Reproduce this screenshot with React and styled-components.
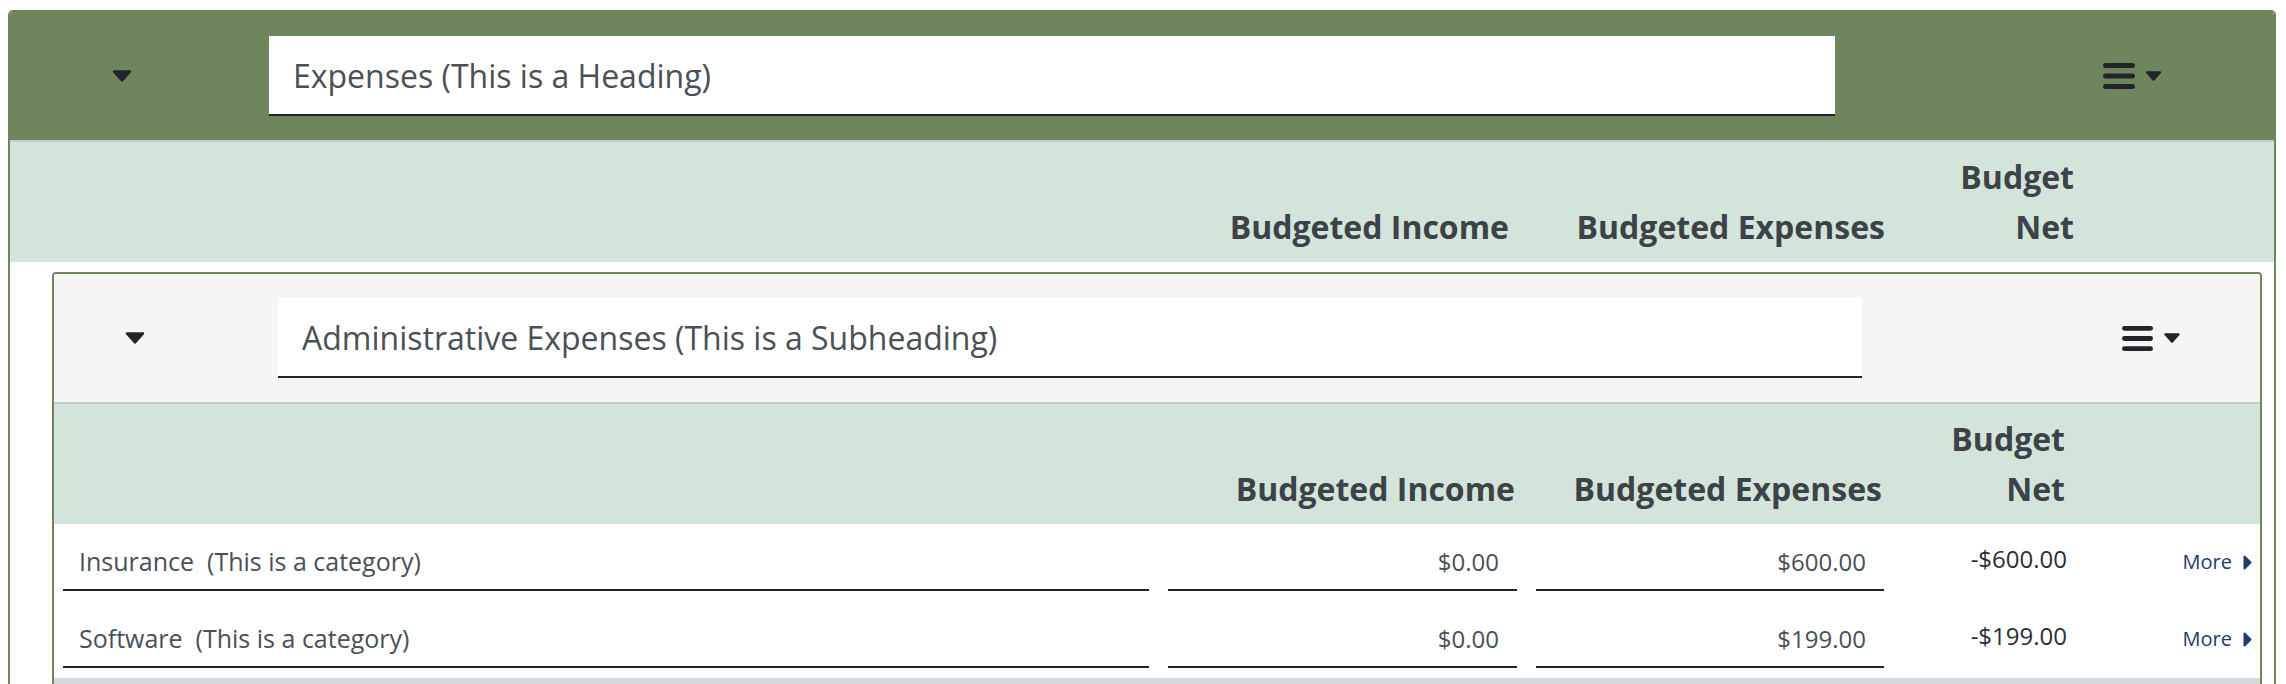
import React from "react";
import styled, { createGlobalStyle } from "styled-components";

const GlobalStyle = createGlobalStyle`
  html, body {
    margin: 0;
    padding: 0;
    overflow: hidden;
    background: #FFFFFF;
  }
  body {
    padding: 10px 10px 0 8px;
    font-family: "Open Sans", "Liberation Sans", sans-serif;
    color: #212529;
  }
`;

const OuterCard = styled.div`
  border: 2px solid #6F855E;
  border-radius: 5px;
  background-color: #FFFFFF;
  overflow: hidden;
  padding-bottom: 10px;
`;

const InnerCard = styled.div`
  margin: 10px 12px 0 42px;
  border: 2px solid #6F855E;
  border-radius: 4px;
  background-color: #FFFFFF;
  overflow: hidden;
`;

//CABECERA
const HeadingBar = styled.div`
  display: grid;
  grid-template-columns: ${props => props.$cols};
  column-gap: ${props => props.$gap}px;
  align-items: center;
  padding: 24px 0;
  background-color: ${props => props.$bg};
`;

const ToggleButton = styled.button`
  justify-self: center;
  display: flex;
  align-items: center;
  justify-content: center;
  width: 40px;
  height: 40px;
  padding: 0;
  border: none;
  background: transparent;
  cursor: pointer;
`;

const HeadingInput = styled.input`
  box-sizing: border-box;
  width: 100%;
  height: 80px;
  padding: 0 24px;
  border: none;
  border-bottom: 2px solid #212529;
  border-radius: 0;
  background-color: #FFFFFF;
  font-family: "Open Sans", "Liberation Sans", sans-serif;
  font-size: 32px;
  color: #495057;
  outline: none;
`;

const MenuButton = styled.button`
  justify-self: end;
  margin-right: ${props => props.$right}px;
  display: flex;
  align-items: center;
  gap: 9px;
  padding: 0;
  border: none;
  background: transparent;
  cursor: pointer;
`;

//TABLA
const HeaderRow = styled.div`
  display: grid;
  grid-template-columns: ${props => props.$cols};
  column-gap: 19px;
  padding: 10px 0 10px 9px;
  border-top: 2px solid #C6CACC;
  background-color: #D3E4DA;
`;

const HeaderLabel = styled.div`
  align-self: end;
  padding-right: 2px;
  text-align: right;
  font-size: 32px;
  font-weight: 700;
  line-height: 50px;
  color: #3C4248;
`;

const ItemRow = styled.div`
  display: grid;
  grid-template-columns: ${props => props.$cols};
  column-gap: 19px;
  align-items: start;
  padding: 11px 8px 10px 9px;
  background-color: #FFFFFF;
`;

const CellInput = styled.input`
  box-sizing: border-box;
  width: 100%;
  height: 56px;
  padding: 8px ${props => (props.$right ? "18px" : "16px")} 10px;
  border: none;
  border-bottom: 2px solid #212529;
  border-radius: 0;
  background: transparent;
  font-family: "Open Sans", "Liberation Sans", sans-serif;
  font-size: ${props => (props.$right ? "24px" : "25px")};
  line-height: 36px;
  text-align: ${props => (props.$right ? "right" : "left")};
  color: #495057;
  outline: none;
`;

const NetValue = styled.div`
  padding-top: 6px;
  text-align: right;
  font-size: 24px;
  line-height: 36px;
  color: #2B3035;
`;

const MoreLink = styled.a`
  justify-self: end;
  display: flex;
  align-items: center;
  gap: 11px;
  padding-top: 11px;
  font-size: 20px;
  line-height: 32px;
  color: #1F3C6B;
  text-decoration: none;
  cursor: pointer;
`;

const TotalBand = styled.div`
  height: 60px;
  background-color: #D5D9DC;
`;

const CaretDown = ({ w = 20, h = 12 }) => (
  <svg width={w} height={h} viewBox="0 0 20 12">
    <path d="M2 1.5 L18 1.5 L10 10.5 Z" fill="#212529" stroke="#212529" strokeWidth="2.5" strokeLinejoin="round" />
  </svg>
);

const Bars = ({ w = 32, h = 26 }) => (
  <svg width={w} height={h} viewBox="0 0 32 26">
    <rect x="0" y="0" width="32" height="5" rx="2.5" fill="#212529" />
    <rect x="0" y="10.5" width="32" height="5" rx="2.5" fill="#212529" />
    <rect x="0" y="21" width="32" height="5" rx="2.5" fill="#212529" />
  </svg>
);

const CaretRight = () => (
  <svg width="9" height="15" viewBox="0 0 9 15">
    <path d="M1.5 1.5 L7.5 7.5 L1.5 13.5 Z" fill="#1F3C6B" stroke="#1F3C6B" strokeWidth="2" strokeLinejoin="round" />
  </svg>
);

const categorias = [
  { nombre: "Insurance  (This is a category)", ingreso: "$0.00", gasto: "$600.00", neto: "-$600.00" },
  { nombre: "Software  (This is a category)", ingreso: "$0.00", gasto: "$199.00", neto: "-$199.00" },
];

const OUTER_COLS = "1115px 358px 357px 170px 1fr";
const INNER_COLS = "1086px 349px 348px 164px 1fr";

const Encabezados = ({ cols }) => (
  <HeaderRow $cols={cols}>
    <div />
    <HeaderLabel>Budgeted Income</HeaderLabel>
    <HeaderLabel>Budgeted Expenses</HeaderLabel>
    <HeaderLabel>Budget Net</HeaderLabel>
    <div />
  </HeaderRow>
);

const App = () => {
  return (
    <>
      <GlobalStyle />
      <OuterCard>
        <HeadingBar $cols="224px 1566px 1fr" $gap={35} $bg="#6F855E">
          <ToggleButton><CaretDown /></ToggleButton>
          <HeadingInput defaultValue="Expenses (This is a Heading)" />
          <MenuButton $right={111}>
            <Bars />
            <CaretDown w={19} h={10} />
          </MenuButton>
        </HeadingBar>
        <Encabezados cols={OUTER_COLS} />

        <InnerCard>
          <HeadingBar $cols="162px 1584px 1fr" $gap={62} $bg="#F5F5F5">
            <ToggleButton><CaretDown /></ToggleButton>
            <HeadingInput defaultValue="Administrative Expenses (This is a Subheading)" />
            <MenuButton $right={78}>
              <Bars w={31} h={27} />
              <CaretDown w={20} h={10} />
            </MenuButton>
          </HeadingBar>
          <Encabezados cols={INNER_COLS} />
          {
            categorias.map((c, i) => (
              <ItemRow $cols={INNER_COLS} key={i}>
                <CellInput defaultValue={c.nombre} />
                <CellInput $right defaultValue={c.ingreso} />
                <CellInput $right defaultValue={c.gasto} />
                <NetValue>{c.neto}</NetValue>
                <MoreLink>More <CaretRight /></MoreLink>
              </ItemRow>
            ))
          }
          <TotalBand />
        </InnerCard>
      </OuterCard>
    </>
  );
};

export default App;
